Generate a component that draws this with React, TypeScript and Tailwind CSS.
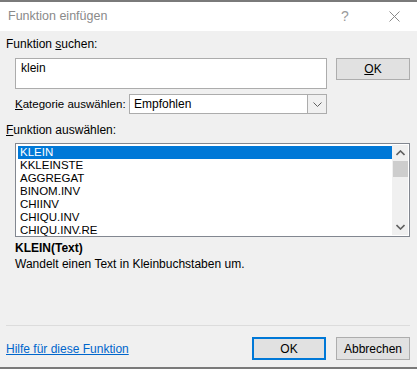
import React, { useState } from "react";

const funktionen = [
  "KLEIN",
  "KKLEINSTE",
  "AGGREGAT",
  "BINOM.INV",
  "CHIINV",
  "CHIQU.INV",
  "CHIQU.INV.RE",
];

const font = { fontFamily: '"Liberation Sans", Arial, sans-serif' };

const App: React.FC = () => {
  const [search, setSearch] = useState("klein");
  const [selected, setSelected] = useState(0);

  return (
    <div
      className="w-[417px] h-[369px] bg-[#f0f0f0] flex flex-col border-t-2 border-b-2 border-[#7a7a7a] text-[12px] text-black overflow-hidden"
      style={font}
    >
      {/* title bar */}
      <div className="h-[29px] bg-white flex items-center pl-2 shrink-0">
        <span className="text-[12.5px] text-[#8a8a8a] flex-1">Funktion einfügen</span>
        <span className="text-[14px] text-[#9a9a9a] w-[12px] mr-[36px]">?</span>
        <svg width="11" height="11" viewBox="0 0 11 11" className="mr-[17px]">
          <path d="M0.5 0.5 L10.5 10.5 M10.5 0.5 L0.5 10.5" stroke="#8a8a8a" strokeWidth="1" />
        </svg>
      </div>

      <div className="flex-1 flex flex-col px-[6px]">
        <div className="mt-[5px] leading-[16px]">
          Funktion <span className="underline">s</span>uchen:
        </div>

        <div className="flex mt-[6px] pl-[9px]">
          <div className="flex flex-col w-[312px]">
            <textarea
              value={search}
              onChange={(e) => setSearch(e.target.value)}
              className="h-[31px] w-full bg-white border border-[#acacac] px-[5px] py-[1px] leading-[16px] resize-none outline-none text-[12px]"
              style={font}
            />
            <div className="flex items-center mt-[5px]">
              <span className="w-[114px] text-[11.5px] leading-[16px] whitespace-nowrap">
                <span className="underline">K</span>ategorie auswählen:
              </span>
              <div className="flex h-[20px] flex-1 bg-white border border-[#acacac]">
                <span className="flex-1 pl-[4px] leading-[18px]">Empfohlen</span>
                <div className="w-[19px] border-l border-[#acacac] bg-[#f0f0f0] flex items-center justify-center">
                  <svg width="9" height="5" viewBox="0 0 9 5">
                    <path d="M0.5 0.5 L4.5 4.5 L8.5 0.5" fill="none" stroke="#606060" strokeWidth="1" />
                  </svg>
                </div>
              </div>
            </div>
          </div>
          <button className="ml-[9px] w-[74px] h-[22px] bg-[#e1e1e1] border border-[#adadad] text-[12px]">
            <span className="underline">O</span>K
          </button>
        </div>

        <div className="mt-[8px] leading-[16px]">
          <span className="underline">F</span>unktion auswählen:
        </div>

        <div className="ml-[9px] mt-[5px] w-[395px] h-[94px] bg-white border border-[#828790] flex p-[2px] pr-[1px]">
          <div className="flex-1 flex flex-col">
            {funktionen.map((f, i) => (
              <div
                key={f}
                onClick={() => setSelected(i)}
                className={`h-[13px] leading-[13px] text-[11.5px] pl-[2px] cursor-default ${
                  selected === i ? "bg-[#0078d7] text-white" : "text-black"
                }`}
              >
                {f}
              </div>
            ))}
          </div>
          <div className="w-[16px] -my-[1px] bg-[#f0f0f0] flex flex-col items-center">
            <div className="h-[16px] flex items-center justify-center">
              <svg width="9" height="6" viewBox="0 0 9 6">
                <path d="M0.5 5 L4.5 1 L8.5 5" fill="none" stroke="#606060" strokeWidth="1.6" />
              </svg>
            </div>
            <div className="w-[15px] h-[16px] bg-[#cdcdcd]" />
            <div className="flex-1" />
            <div className="h-[16px] flex items-center justify-center">
              <svg width="9" height="6" viewBox="0 0 9 6">
                <path d="M0.5 1 L4.5 5 L8.5 1" fill="none" stroke="#606060" strokeWidth="1.6" />
              </svg>
            </div>
          </div>
        </div>

        <div className="pl-[9px] mt-[3px] font-bold leading-[16px]">
          {funktionen[selected]}(Text)
        </div>
        <div className="pl-[9px] leading-[16px]">Wandelt einen Text in Kleinbuchstaben um.</div>

        <div className="flex-1" />
        <div className="h-px bg-[#dcdcdc] mr-[1px]" />

        <div className="flex items-center mt-[11px] mb-[7px]">
          <a href="#" className="text-[#0066cc] underline flex-1 leading-[16px]">
            Hilfe für diese Funktion
          </a>
          <button className="w-[74px] h-[23px] bg-[#e1e1e1] border-2 border-[#0078d7] text-[12px]">
            OK
          </button>
          <button className="ml-[10px] w-[74px] h-[23px] bg-[#e1e1e1] border border-[#adadad] text-[12px] mr-[1px]">
            Abbrechen
          </button>
        </div>
      </div>
    </div>
  );
};

export default App;
